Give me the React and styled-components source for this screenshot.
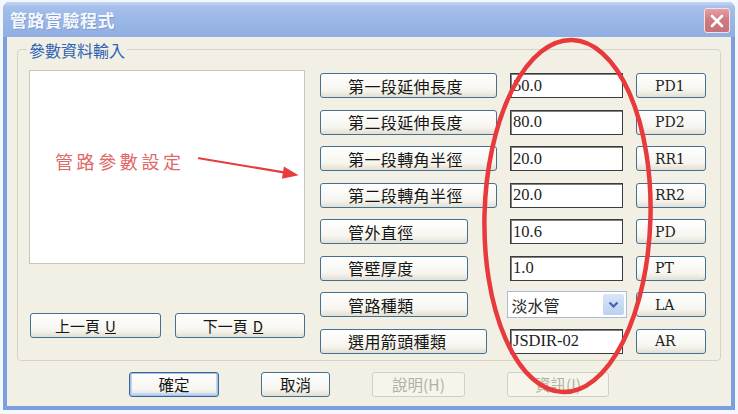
import React from "react";
import styled, { createGlobalStyle, css } from "styled-components";

const Global = createGlobalStyle`
  html, body { margin: 0; padding: 0; background: #ffffff; }
  body { font-family: "Noto Sans CJK TC", "Noto Sans CJK SC", sans-serif; }
  * { box-sizing: border-box; }
`;

const Stage = styled.div`
  position: relative;
  width: 738px;
  height: 414px;
  overflow: hidden;
  padding: 2px 0 0 3px;
  background: #f4f7fc;
`;

const Window = styled.div`
  width: 732px;
  height: 408px;
  display: flex;
  flex-direction: column;
  background: #7c9fdd;
  border-radius: 7px 7px 0 0;
  overflow: hidden;
`;

const TitleBar = styled.div`
  height: 35px;
  flex: none;
  display: flex;
  align-items: center;
  justify-content: space-between;
  padding: 0 5px 0 7px;
  background: linear-gradient(#c4d6f3 0%, #a6bfea 14%, #9ab6e6 55%, #90aee2 100%);
`;

const Title = styled.span`
  font-size: 17px;
  font-weight: 700;
  color: #f4f7fd;
  letter-spacing: 0.5px;
  text-shadow: 1px 1px 0 #7f9dd2;
`;

const CloseBtn = styled.div`
  width: 26px;
  height: 25px;
  margin-top: 2px;
  border-radius: 3px;
  border: 1px solid #f1e2e4;
  background: linear-gradient(#e3a0a4, #d07880 50%, #c9717a);
  display: flex;
  align-items: center;
  justify-content: center;
`;

const Body = styled.div`
  flex: 1;
  margin: 0 4px 4px;
  background: #f2f0e5;
  display: flex;
  flex-direction: column;
`;

const GroupBox = styled.div`
  position: relative;
  margin: 12px 0 0 10px;
  width: 704px;
  height: 312px;
  border: 1px solid #d6d3c4;
  border-radius: 4px;
  padding: 20px 0 0 11px;
  display: flex;
  gap: 15px;
`;

const Legend = styled.span`
  position: absolute;
  top: -9px;
  left: 9px;
  padding: 0 2px;
  background: #f2f0e5;
  font-size: 16px;
  line-height: 18px;
  color: #2d62b4;
`;

const LeftCol = styled.div`
  width: 276px;
  display: flex;
  flex-direction: column;
`;

const ListBox = styled.div`
  height: 194px;
  background: #ffffff;
  border: 1px solid #c9c6b8;
  display: flex;
  align-items: flex-start;
  padding: 78px 0 0 25px;
`;

const Note = styled.span`
  font-size: 18px;
  line-height: 24px;
  letter-spacing: 3.6px;
  color: #e06868;
  white-space: nowrap;
`;

const PageRow = styled.div`
  margin-top: 49px;
  display: flex;
  gap: 14px;
  padding-left: 1px;
`;

const baseButton = css`
  height: 25px;
  border: 1px solid #46708f;
  border-radius: 3px;
  background: linear-gradient(#ffffff 0%, #f6f5ef 70%, #e2dfd3 100%);
  color: #151515;
  font-size: 16px;
  line-height: 1;
  display: flex;
  align-items: center;
  white-space: nowrap;
`;

const PageButton = styled.div`
  ${baseButton};
  width: ${(p) => p.$w}px;
  justify-content: center;
  padding-right: ${(p) => p.$pr}px;
  font-size: 15px;
  u { margin-left: 5px; }
`;

const FieldGrid = styled.div`
  padding-top: 3px;
  display: grid;
  grid-template-columns: 177px 113px 70px;
  grid-auto-rows: 25px;
  column-gap: 13px;
  row-gap: 11.5px;
  align-items: center;
`;

const LabelButton = styled.div`
  ${baseButton};
  width: ${(p) => p.$w}px;
  padding-left: 27px;
  letter-spacing: 0.4px;
`;

const CodeButton = styled.div`
  ${baseButton};
  width: 70px;
  padding-left: 18px;
  font-family: "DejaVu Serif", "Liberation Serif", serif;
  font-size: 14px;
  color: #222;
`;

const TextField = styled.div`
  height: 25px;
  background: #ffffff;
  border: 1px solid #3b3b3b;
  box-shadow: inset 1px 1px 0 #808080;
  padding-left: 2px;
  display: flex;
  align-items: center;
  font-family: "Liberation Serif", serif;
  font-size: 16.5px;
  color: #1d1d1d;
`;

const Combo = styled.div`
  justify-self: center;
  width: 120px;
  height: 27px;
  background: #ffffff;
  border: 1px solid #a9bcd8;
  display: flex;
  align-items: center;
  padding: 0 2px 0 4px;
`;

const ComboText = styled.span`
  flex: 1;
  font-size: 16px;
  color: #2a2a2a;
`;

const ComboArrow = styled.div`
  width: 21px;
  height: 21px;
  border-radius: 2px;
  background: linear-gradient(#d9e5f7, #bcd0ef);
  display: flex;
  align-items: center;
  justify-content: center;
`;

const BottomRow = styled.div`
  margin-top: 11px;
  padding-left: 122px;
  display: flex;
  gap: 42px;
`;

const DialogButton = styled.div`
  ${baseButton};
  width: ${(p) => p.$w}px;
  justify-content: center;
  font-size: 15.5px;
  ${(p) =>
    p.$default &&
    css`
      border-color: #3c6890;
      box-shadow: inset 0 0 0 1px #9fc0ee, inset 0 -1px 0 2px #c4d6f3;
    `}
  ${(p) =>
    p.$disabled &&
    css`
      border-color: #d2d0c3;
      background: #f6f5ec;
      color: #b3b0a1;
    `}
`;

const Overlay = styled.svg`
  position: absolute;
  top: 0;
  left: 0;
  pointer-events: none;
`;

const rows = [
  { label: "第一段延伸長度", w: 177, value: "50.0", code: "PD1" },
  { label: "第二段延伸長度", w: 177, value: "80.0", code: "PD2" },
  { label: "第一段轉角半徑", w: 177, value: "20.0", code: "RR1" },
  { label: "第二段轉角半徑", w: 177, value: "20.0", code: "RR2" },
  { label: "管外直徑", w: 148, value: "10.6", code: "PD" },
  { label: "管壁厚度", w: 148, value: "1.0", code: "PT" },
  { label: "管路種類", w: 148, combo: "淡水管", code: "LA" },
  { label: "選用箭頭種類", w: 167, value: "JSDIR-02", code: "AR" },
];

export default function App() {
  return (
    <>
      <Global />
      <Stage>
        <Window>
          <TitleBar>
            <Title>管路實驗程式</Title>
            <CloseBtn>
              <svg width="16" height="16" viewBox="0 0 16 16">
                <path d="M3 3 L13 13 M13 3 L3 13" stroke="#ffffff" strokeWidth="2.6" strokeLinecap="round" />
              </svg>
            </CloseBtn>
          </TitleBar>
          <Body>
            <GroupBox>
              <Legend>參數資料輸入</Legend>
              <LeftCol>
                <ListBox>
                  <Note>管路參數設定</Note>
                  <svg width="110" height="26" viewBox="0 0 110 26" style={{ marginLeft: 12, marginTop: 6 }}>
                    <path d="M2 3 L92 18" stroke="#e63c3c" strokeWidth="2.2" strokeLinecap="round" />
                    <path d="M104 20.5 L89 11.5 L87 24 Z" fill="#e63c3c" />
                  </svg>
                </ListBox>
                <PageRow>
                  <PageButton $w={131} $pr={20}>
                    上一頁<u>U</u>
                  </PageButton>
                  <PageButton $w={130} $pr={14}>
                    下一頁<u>D</u>
                  </PageButton>
                </PageRow>
              </LeftCol>
              <FieldGrid>
                {rows.map((r) => (
                  <React.Fragment key={r.code}>
                    <LabelButton $w={r.w}>{r.label}</LabelButton>
                    {r.combo ? (
                      <Combo>
                        <ComboText>{r.combo}</ComboText>
                        <ComboArrow>
                          <svg width="11" height="8" viewBox="0 0 11 8">
                            <path d="M1.5 1.5 L5.5 5.5 L9.5 1.5" stroke="#3f64b5" strokeWidth="2.2" fill="none" />
                          </svg>
                        </ComboArrow>
                      </Combo>
                    ) : (
                      <TextField>{r.value}</TextField>
                    )}
                    <CodeButton>{r.code}</CodeButton>
                  </React.Fragment>
                ))}
              </FieldGrid>
            </GroupBox>
            <BottomRow>
              <DialogButton $w={90} $default>確定</DialogButton>
              <DialogButton $w={69}>取消</DialogButton>
              <DialogButton $w={93} $disabled>說明(H)</DialogButton>
              <DialogButton $w={102} $disabled>資訊(I)</DialogButton>
            </BottomRow>
          </Body>
        </Window>
        <Overlay width="738" height="414" viewBox="0 0 738 414">
          <ellipse cx="567.5" cy="216" rx="83" ry="176" fill="none" stroke="#e8393c" strokeWidth="4.5" transform="rotate(1.5 567.5 216)" />
        </Overlay>
      </Stage>
    </>
  );
}
